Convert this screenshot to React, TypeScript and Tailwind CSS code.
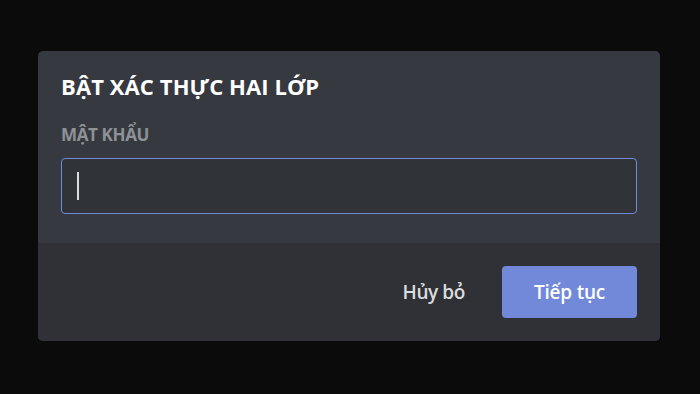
import React from "react";

export default function App() {
  return (
    <div className="w-[700px] h-[394px] bg-[#0b0b0c] pl-[38px] pt-[51px]" style={{ fontFamily: '"Open Sans", "Noto Sans", sans-serif' }}>
      <div className="w-[622px] h-[290px] rounded-[5px] overflow-hidden flex flex-col bg-[#36393f]">
        <div className="flex-1 px-[23px] pt-[21px] flex flex-col">
          <div className="text-[22px] leading-[28px] font-bold text-white uppercase tracking-[0.1px]">BẬT XÁC THỰC HAI LỚP</div>
          <div className="mt-[24px] text-[17px] leading-[22px] font-bold text-[#8e9297] uppercase tracking-[-0.35px]">MẬT KHẨU</div>
          <div className="mt-[12px] h-[56px] rounded-[4px] border border-[#7289da] bg-[#303338] flex items-center pl-[15px]">
            <div className="w-[1.5px] h-[28px] bg-[#dcddde]" />
          </div>
        </div>
        <div className="h-[98px] bg-[#2f3136] flex items-center justify-end pr-[23px]">
          <button className="text-[19px] font-semibold text-[#dcddde] mr-[37px] tracking-[-0.4px]">Hủy bỏ</button>
          <button className="w-[135px] h-[52px] rounded-[4px] bg-[#7289da] text-white text-[19px] font-semibold tracking-[-0.2px]">Tiếp tục</button>
        </div>
      </div>
    </div>
  );
}
